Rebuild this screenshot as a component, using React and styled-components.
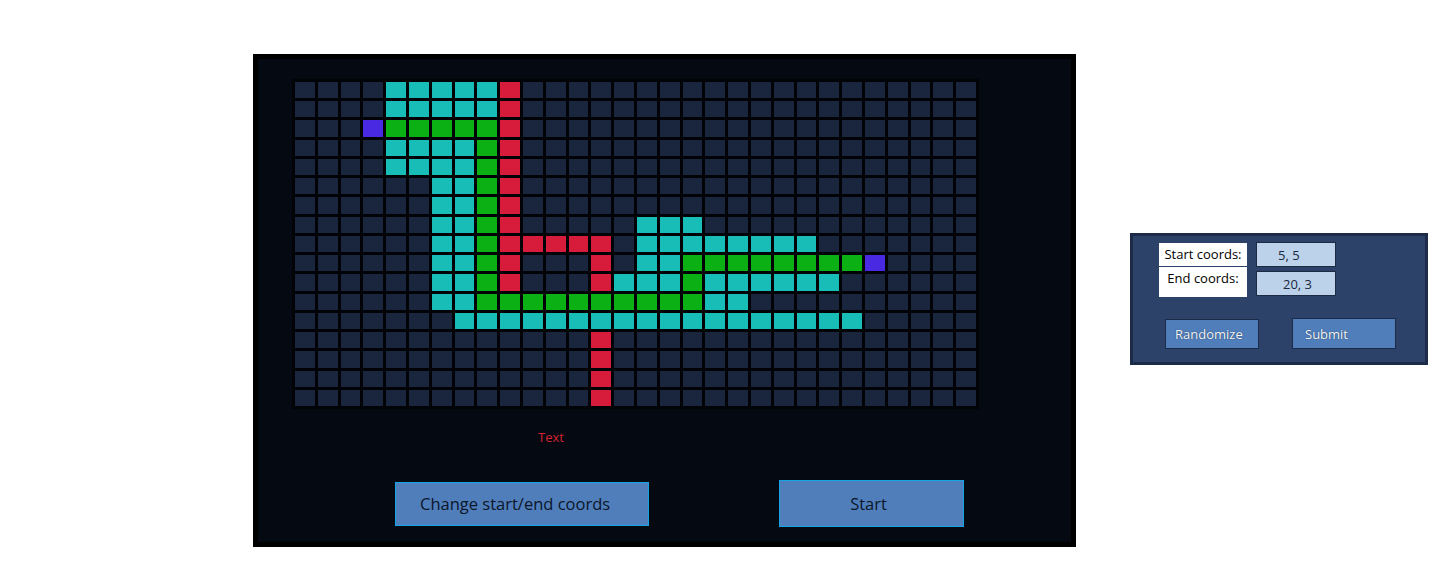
import React from "react";
import styled, { createGlobalStyle } from "styled-components";

const GlobalStyle = createGlobalStyle`
  html, body { margin: 0; padding: 0; background: #ffffff; }
  body { font-family: "Open Sans", "Noto Sans", sans-serif; }
`;

const GRID = [
  "....tttttr....................",
  "....tttttr....................",
  "...pgggggr....................",
  "....ttttgr....................",
  "....ttttgr....................",
  "......ttgr....................",
  "......ttgr....................",
  "......ttgr.....ttt............",
  "......ttgrrrrr.tttttttt.......",
  "......ttgr...r.ttggggggggp....",
  "......ttgr...rtttgtttttt......",
  "......ttggggggggggtt..........",
  ".......tttttttttttttttttt.....",
  ".............r................",
  ".............r................",
  ".............r................",
  ".............r................",
];

const CELL_COLORS = {
  ".": "#19263d",
  t: "#19bdb7",
  g: "#0bb014",
  r: "#d61b3b",
  p: "#4a29e2",
};

const Page = styled.div`
  display: flex;
  align-items: center;
  gap: 54px;
  padding: 54px 0 0 253px;
`;

const Board = styled.section`
  box-sizing: border-box;
  width: 823px;
  height: 493px;
  border: 5px solid #000;
  background: #050a12;
  padding: 20px 0 0 34px;
  display: flex;
  flex-direction: column;
  align-items: flex-start;
`;

const Grid = styled.div`
  box-sizing: border-box;
  width: 687px;
  height: 330px;
  padding: 3px;
  background: #020306;
  display: grid;
  grid-template-columns: repeat(30, 1fr);
  grid-template-rows: repeat(17, 1fr);
  gap: 3px;
`;

const Cell = styled.div`
  background: ${(p) => p.$color};
`;

const Status = styled.div`
  margin: 19px 0 0 246px;
  font-size: 13px;
  line-height: 18px;
  color: #d42030;
`;

const ActionRow = styled.div`
  display: flex;
  align-items: center;
  margin-top: 34px;
`;

const ActionButton = styled.button`
  box-sizing: border-box;
  width: ${(p) => p.$w}px;
  height: ${(p) => p.$h}px;
  margin-left: ${(p) => p.$ml}px;
  padding: 0 ${(p) => p.$pr}px 0 ${(p) => p.$pl}px;
  display: flex;
  align-items: center;
  justify-content: ${(p) => (p.$pl ? "flex-start" : "center")};
  background: #4f7ebb;
  border: 1px solid #14a3e6;
  color: #0b1629;
  font-family: "Open Sans", "Noto Sans", sans-serif;
  font-size: 16.5px;
  cursor: pointer;
`;

const Side = styled.aside`
  box-sizing: border-box;
  width: 298px;
  height: 132px;
  margin-bottom: 3px;
  border: 3px solid #1b2b48;
  background: #2c4268;
  padding: 6px 0 0 26px;
  display: flex;
  flex-direction: column;
`;

const Fields = styled.div`
  display: flex;
  align-items: flex-start;
  gap: 9px;
`;

const Labels = styled.div`
  display: flex;
  flex-direction: column;
  gap: 1px;
  margin-top: 1px;
`;

const LabelBox = styled.div`
  box-sizing: border-box;
  width: 88px;
  height: ${(p) => p.$h}px;
  padding-top: ${(p) => p.$pt}px;
  background: #ffffff;
  color: #000;
  font-size: 13px;
  line-height: ${(p) => p.$lh}px;
  text-align: center;
`;

const Inputs = styled.div`
  display: flex;
  flex-direction: column;
  gap: 4px;
`;

const CoordInput = styled.input`
  box-sizing: border-box;
  width: 80px;
  height: 25px;
  margin: 0;
  padding: 0 0 0 ${(p) => p.$pl}px;
  border: 1px solid #1c2b45;
  background: #bcd2ea;
  color: #1a2740;
  font-family: "Open Sans", "Noto Sans", sans-serif;
  font-size: 13px;
  outline: none;
`;

const SideButtons = styled.div`
  display: flex;
  align-items: center;
  margin: 21px 0 0 6px;
  gap: 33px;
`;

const SideButton = styled.button`
  box-sizing: border-box;
  width: ${(p) => p.$w}px;
  height: ${(p) => p.$h}px;
  padding: 0 0 0 ${(p) => p.$pl}px;
  display: flex;
  align-items: center;
  background: #4f7ebb;
  border: 1px solid #1b2b48;
  color: #f6f8fc;
  text-shadow: 0 0 1px #1a2740;
  font-family: "Open Sans", "Noto Sans", sans-serif;
  font-size: 13px;
  cursor: pointer;
`;

export default function App() {
  return (
    <>
      <GlobalStyle />
      <Page>
        <Board>
          <Grid>
            {GRID.flatMap((row, r) =>
              row.split("").map((ch, c) => (
                <Cell key={`${r}-${c}`} $color={CELL_COLORS[ch]} />
              ))
            )}
          </Grid>
          <Status>Text</Status>
          <ActionRow>
            <ActionButton $w={254} $h={44} $ml={103} $pl={24} $pr={0}>
              Change start/end coords
            </ActionButton>
            <ActionButton $w={185} $h={47} $ml={130} $pl={0} $pr={6}>
              Start
            </ActionButton>
          </ActionRow>
        </Board>
        <Side>
          <Fields>
            <Labels>
              <LabelBox $h={23} $lh={23} $pt={0}>Start coords:</LabelBox>
              <LabelBox $h={30} $lh={18} $pt={2}>End coords:</LabelBox>
            </Labels>
            <Inputs>
              <CoordInput readOnly value="5, 5" $pl={21} />
              <CoordInput readOnly value="20, 3" $pl={26} />
            </Inputs>
          </Fields>
          <SideButtons>
            <SideButton $w={94} $h={30} $pl={9}>Randomize</SideButton>
            <SideButton $w={104} $h={31} $pl={12}>Submit</SideButton>
          </SideButtons>
        </Side>
      </Page>
    </>
  );
}
